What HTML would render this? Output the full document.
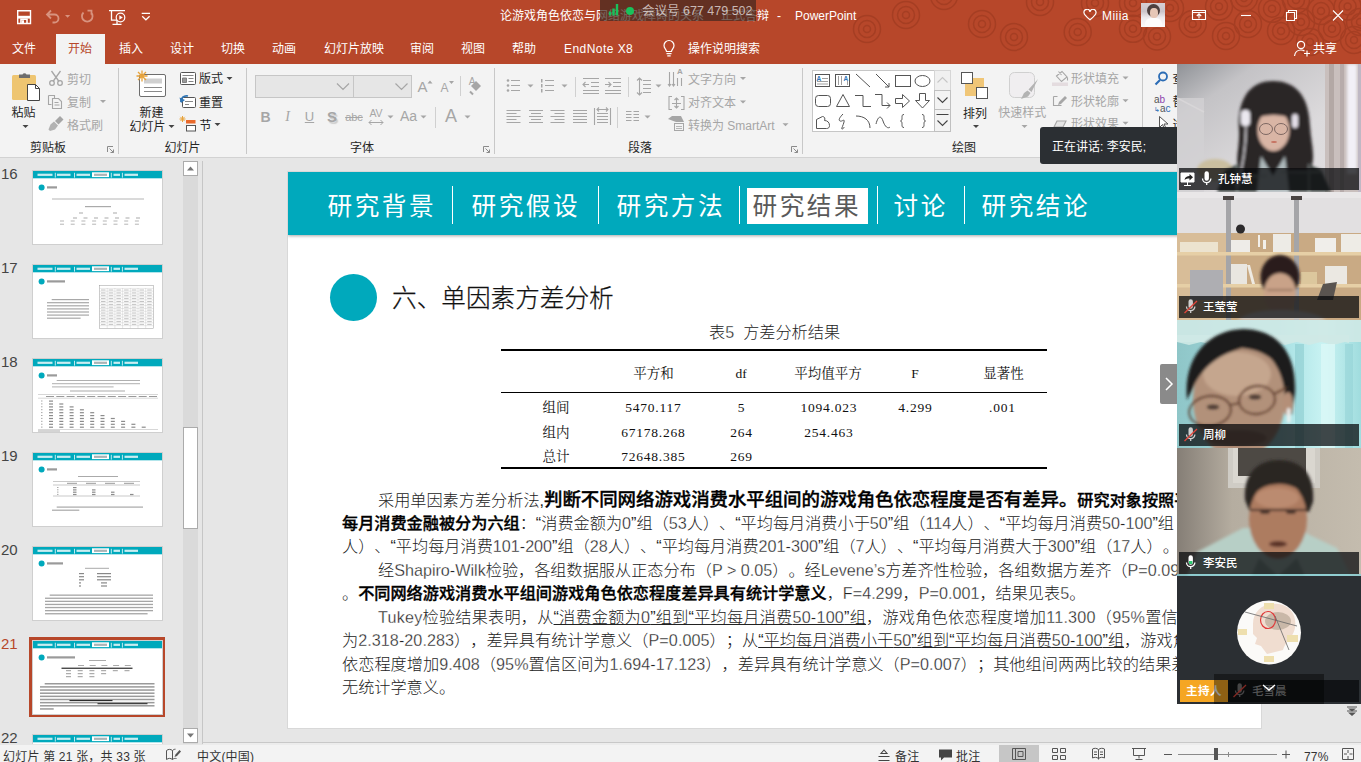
<!DOCTYPE html>
<html lang="zh-CN">
<head>
<meta charset="utf-8">
<title>PowerPoint</title>
<style>
*{box-sizing:border-box;margin:0;padding:0}
html,body{width:1361px;height:762px;overflow:hidden}
body{position:relative;background:#e6e6e6;font-family:"Liberation Sans","Noto Sans CJK SC",sans-serif;font-size:13px;color:#262626}
.abs{position:absolute}
#top{left:0;top:0;width:1361px;height:64px;background:#b7472a;overflow:hidden}
#top .t{margin-top:.5px;position:absolute;color:#fff;font-size:12px;line-height:16px;white-space:nowrap}
#acttab{left:56px;top:34px;width:49px;height:30px;background:#f3f3f3}
#ribbon{left:0;top:64px;width:1361px;height:94px;background:#f3f3f3;border-bottom:1px solid #d2d2d2;overflow:hidden}
#ribbon .l{position:absolute;margin-top:1.5px;font-size:12px;line-height:16px;white-space:nowrap;color:#262626}
#ribbon .g{color:#a6a6a6}
#ribbon .sep{position:absolute;top:5px;width:1px;height:83px;background:#d4d4d4}
#status{left:0;top:742px;width:1361px;height:20px;background:linear-gradient(#f3f3f3,#f3f3f3) 0 3px/100% 100% no-repeat}
#status .l{position:absolute;font-size:12px;line-height:16px;white-space:nowrap;color:#333;top:6.500px;letter-spacing:.2px}
#thumbs{left:0;top:158px;width:183px;height:586px;overflow:hidden}
#slide{left:288px;top:172px;width:973px;height:556px;background:#fff;overflow:hidden;box-shadow:0 0 0 1px #d8d8d8}
#video{left:1177px;top:64px;width:184px;height:640px;background:#2b2f33;overflow:hidden}
.hd{position:absolute;top:16px;font-size:24.640px;line-height:38px;letter-spacing:2.500px;color:#fff;white-space:nowrap}
.vs{position:absolute;top:14px;width:1px;height:38px;background:#fff}
#tbl span{position:absolute;font-family:"Liberation Serif","Noto Serif CJK SC",serif;font-size:13.500px;line-height:18px;width:120px;text-align:center;white-space:nowrap;color:#111}
#para p{text-spacing-trim:space-all;position:absolute;left:54px;font-size:16.170px;line-height:23px;font-weight:300;white-space:nowrap;color:#222}
#para b{font-weight:500;color:#000;-webkit-text-stroke:.35px #000}
#para b.big{font-size:18.480px;letter-spacing:-.08px}
.n5{-webkit-text-stroke:.3px #fff}
#para .n{-webkit-text-stroke:.3px #fff}
</style>
</head>
<body>
<div id="top" class="abs">
<svg class="abs" style="left:0;top:0" width="1361" height="64" viewBox="0 0 1361 64" fill="none" stroke="#a53e23" stroke-width="1.500"><defs><g id="cc"><circle r="3.500"/><circle r="8.500"/><circle r="13.500"/></g></defs><use href="#cc" x="867" y="29"/><use href="#cc" x="906" y="15"/><use href="#cc" x="944" y="-4"/><use href="#cc" x="982" y="24"/><use href="#cc" x="1014" y="37"/><use href="#cc" x="1040" y="2"/><use href="#cc" x="1077.7" y="32"/><use href="#cc" x="1095" y="3"/><use href="#cc" x="1133" y="28.8"/><use href="#cc" x="1157" y="36.5"/><use href="#cc" x="1133" y="3"/><use href="#cc" x="1170" y="8"/><use href="#cc" x="1192.7" y="24"/><use href="#cc" x="1219" y="6.6"/><use href="#cc" x="1226" y="36"/><use href="#cc" x="1248" y="24"/><use href="#cc" x="1272" y="8.8"/><use href="#cc" x="1281" y="31"/><use href="#cc" x="1301" y="22"/><use href="#cc" x="1321" y="11"/><use href="#cc" x="1347.6" y="6.6"/><use href="#cc" x="1332" y="28.8"/><use href="#cc" x="1354" y="40"/><use href="#cc" x="1310" y="42"/><use href="#cc" x="1296" y="0"/><use href="#cc" x="1244" y="-2"/><use href="#cc" x="1360" y="22"/></svg>
<!-- quick access icons -->
<svg class="abs" style="left:0;top:0" width="170" height="32" viewBox="0 0 170 32" fill="none" stroke="#fff" stroke-width="1.400">
<path d="M17.700 10.700h12.800v12.800h-12.800z"/><path d="M17.700 15.800h12.800v2.800h-12.800z" fill="#fff" stroke="none"/><path d="M21 23.500v-4.200h6v4.200" stroke-width="1.600"/><path d="M22 20.300h2v3.200h-2z" fill="#fff" stroke="none"/>
<g stroke="#d8937f" stroke-width="1.800"><path d="M47 14.500h7.500a4 4 0 0 1 0 8h-2 M51 10.500l-4 4 4 4"/><path d="M65 15h5.200l-2.600 2.800z" fill="#d8937f" stroke="none"/><path d="M83.500 12.500a5.300 5.300 0 1 0 7.500 0 M87.500 10.700h4v4"/></g>
<path d="M109 10.700h16 M111.500 10.700v9.500h6 M112.500 24.300h9 M117 20.500v3.500" stroke-width="1.300"/><circle cx="120.500" cy="17.500" r="4.300" fill="#b7472a" stroke-width="1.200"/><path d="M119.300 15.300v4.400l3.500-2.200z" fill="#fff" stroke="none"/>
<path d="M141.700 13.300h8.300 M142.200 16.300l3.700 3.500 3.700-3.500" stroke-width="1.200"/>
</svg>
<div id="acttab" class="abs"></div>
<span class="t" style="left:500px;top:7px">论游戏角色依恋与网络游戏障碍的关系</span><span class="t" style="left:721px;top:7px">正式答辩</span><span class="t" style="left:777px;top:7px">-</span><span class="t" style="left:795px;top:7px">PowerPoint</span>
<div class="abs" style="left:600px;top:0;width:156px;height:21px;background:rgba(66,40,32,.72)"></div>
<svg class="abs" style="left:606px;top:0" width="32" height="20" viewBox="0 0 32 20"><path d="M4 15.500v-4M7.500 15.500v-7M11 15.500v-11.500" stroke="#19c15b" stroke-width="2.400" fill="none"/><circle cx="24" cy="11" r="4" fill="#19c15b"/></svg>
<span class="t" style="left:642px;top:2px;color:rgba(255,255,255,.66);font-size:12.500px">会议号 677 479 502</span>
<svg class="abs" style="left:1083px;top:9px" width="14" height="12" viewBox="0 0 14 12"><path d="M7 10.800C3.500 8 1 6 1 3.800a2.800 2.800 0 0 1 6-1 2.800 2.800 0 0 1 6 1C13 6 10.500 8 7 10.800z" fill="none" stroke="#fff" stroke-width="1.200"/></svg><span class="t" style="left:1102px;top:7px;letter-spacing:.45px">Miiia</span>
<div class="abs" style="left:1141px;top:3px;width:24px;height:24px;background:linear-gradient(180deg,#d6cfd4 0,#cbc4c9 35%,#efecef 62%,#fbfbfb 100%);overflow:hidden"><div class="abs" style="left:6px;top:1px;width:13px;height:13px;border-radius:50%;background:#4e403f"></div><div class="abs" style="left:8.500px;top:5px;width:8px;height:10px;border-radius:45%;background:#e6c6b6"></div><div class="abs" style="left:4px;top:15px;width:17px;height:10px;border-radius:6px 6px 0 0;background:#fdfcfc"></div></div>
<svg class="abs" style="left:1185px;top:0" width="176" height="32" viewBox="0 0 176 32" fill="none" stroke="#fff" stroke-width="1.100">
<path d="M7.500 10.500h13v9h-13z M7.500 12.500h13 M14 18.500v-4.500 M11.800 16l2.200-2.200 2.200 2.200"/>
<path d="M56 15.500h10"/>
<path d="M101.500 12.500h8v8h-8z M103.500 12.500v-2h8v8h-2"/>
<path d="M148 10.500l10 10 M158 10.500l-10 10"/>
</svg>
<span class="t" style="left:12px;top:40px">文件</span>
<span class="t" style="left:68px;top:40px;color:#b7472a">开始</span>
<span class="t" style="left:119px;top:40px">插入</span>
<span class="t" style="left:170px;top:40px">设计</span>
<span class="t" style="left:221px;top:40px">切换</span>
<span class="t" style="left:272px;top:40px">动画</span>
<span class="t" style="left:324px;top:40px">幻灯片放映</span>
<span class="t" style="left:410px;top:40px">审阅</span>
<span class="t" style="left:461px;top:40px">视图</span>
<span class="t" style="left:512px;top:40px">帮助</span>
<span class="t" style="left:564px;top:40px;letter-spacing:.45px">EndNote X8</span>
<svg class="abs" style="left:660px;top:38px" width="18" height="20" viewBox="0 0 18 20" fill="none" stroke="#fff" stroke-width="1.200"><path d="M6.500 13.500c0-2-2.500-3-2.500-6a5 5 0 0 1 10 0c0 3-2.500 4-2.500 6z M6.500 15.700h5 M7.300 17.800h3.400"/></svg>
<span class="t" style="left:688px;top:40px">操作说明搜索</span>
<svg class="abs" style="left:1292px;top:38px" width="20" height="20" viewBox="0 0 20 20" fill="none" stroke="#fff" stroke-width="1.200"><circle cx="9" cy="7" r="3.600"/><path d="M2.500 18c.5-4 3-6 6.500-6 1.500 0 2.500.3 3.500 1 M15 12.500v6 M12 15.500h6"/></svg>
<span class="t" style="left:1313px;top:40px">共享</span>
</div>
<div id="ribbon" class="abs">
<svg class="abs" style="left:0;top:0" width="1361" height="94" viewBox="0 0 1361 94">
<rect x="12" y="11" width="24" height="25" rx="1.500" fill="#eec571" stroke="none"/>
<path d="M19 14v-3.500h3.500a2.200 2.200 0 0 1 4 0h3.500v3.500z" fill="#6d6d6d" stroke="none"/>
<path d="M27.500 20.500h8l4 4v12h-12z" fill="#fff" stroke="#444" stroke-width="1"/><path d="M35.500 20.500v4h4" fill="none" stroke="#444"/>
<path d="M22.5 61.0h6l-3 3z" fill="#444" stroke="none"/>
<g fill="none" stroke="#a6a6a6" stroke-width="1.300"><path d="M51.500 7l7.500 10.500 M60.500 7l-7.500 10.500"/><circle cx="52" cy="19" r="2.300"/><circle cx="60" cy="19" r="2.300"/></g>
<g fill="none" stroke="#a6a6a6" stroke-width="1.100"><path d="M48.500 31.500h6v3 M48.500 31.500v9h3"/><path d="M52.500 34.500h6l3 3v7h-9z"/><path d="M54.500 38.500h4 M54.500 41h5"/></g>
<path d="M100 36.0h6l-3 3z" fill="#a6a6a6" stroke="none"/>
<g fill="#a6a6a6" stroke="none"><path d="M60 52l3.500 3.500-5 5-3.500-3.500z"/><path d="M54 57.500l4 4-3 4-5 1.500-1.500-1.500 2-5z" opacity=".85"/></g>
<g fill="none" stroke="#8a8a8a" stroke-width="1"><path d="M108.5 83.5h-.01 M107.5 82.5h5.500 M107.5 82.5v5.500"/><path d="M109.5 84.5l4 4 M113.5 85.5v3h-3"/></g>
<path d="M118.5 4v86" stroke="#c8c8c8" stroke-width="1"/>
<rect x="139.500" y="10.500" width="26" height="22" rx="1.500" fill="#fff" stroke="#6d6d6d"/><rect x="144" y="14.500" width="18" height="5" fill="#d0d0d0"/><path d="M144 23.500h18 M144 27.500h18" stroke="#8a8a8a"/>
<g stroke="#e8a33a" stroke-width="1.300" fill="none"><path d="M142 6.500v11 M136.500 12h11 M138 8l8 8 M146 8l-8 8"/></g>
<path d="M168.5 61.0h6l-3 3z" fill="#444" stroke="none"/>
<rect x="180.500" y="8.500" width="15" height="12" rx="1" fill="#fff" stroke="#555"/><path d="M182.500 11.500h11 M182.500 14v4.500h4v-4.500z M188.500 14.500h5 M188.500 17.500h5" fill="#999" stroke="#777" stroke-width=".9"/>
<path d="M226.5 13.0h6l-3 3z" fill="#444" stroke="none"/>
<rect x="182.500" y="33.500" width="13" height="10" rx="1" fill="#fff" stroke="#555"/><path d="M185 37.500h8 M185 40.500h4" stroke="#888"/><path d="M181 38c-.5-4 3-7 7-6" fill="none" stroke="#2e75b6" stroke-width="1.800"/><path d="M179.500 33.500l1.500 5.500 4-3z" fill="#2e75b6"/>
<g stroke="#e8a33a" stroke-width="1" fill="none"><path d="M182.500 52v6 M179.500 55h6 M180.400 52.900l4.200 4.200 M184.600 52.900l-4.200 4.200"/></g><rect x="186" y="56" width="9.500" height="3.500" fill="#e96a2c"/><rect x="186.500" y="61.500" width="9" height="5.500" fill="#fff" stroke="#555"/>
<path d="M214.5 59.0h6l-3 3z" fill="#444" stroke="none"/>
<path d="M246.5 4v86" stroke="#c8c8c8" stroke-width="1"/>
<rect x="255.500" y="11.500" width="98" height="22" fill="#e6e6e6" stroke="#c6c6c6"/><rect x="353.500" y="11.500" width="58" height="22" fill="#e6e6e6" stroke="#c6c6c6"/>
<path d="M337 19.500l6 6 6-6 M395.500 19.500l6 6 6-6" fill="none" stroke="#a6a6a6" stroke-width="1.200"/>
<path d="M460.500 12v20 M435.500 43v21" stroke="#d0d0d0"/>
<path d="M494.5 4v86" stroke="#c8c8c8" stroke-width="1"/>
<g fill="none" stroke="#8a8a8a" stroke-width="1"><path d="M484.5 83.5h-.01 M483.5 82.5h5.500 M483.5 82.5v5.500"/><path d="M485.5 84.5l4 4 M489.5 85.5v3h-3"/></g>
<path d="M427.500 19.500l2.500-3 2.500 3z M449 17l2.500 3 2.500-3z" fill="#a6a6a6"/>
<path d="M476 17l5 5-5 5-5-5z" fill="#a6a6a6"/><path d="M470 27.500l3 3" stroke="#a6a6a6" stroke-width="2"/>
<path d="M369 58.500h14 M371.500 56l-2.500 2.500 2.500 2.500 M380.500 56l2.500 2.500-2.500 2.500" fill="none" stroke="#a6a6a6" stroke-width="1"/>
<path d="M387.5 51.5h6l-3 3z" fill="#a6a6a6" stroke="none"/>
<path d="M420.5 51.5h6l-3 3z" fill="#a6a6a6" stroke="none"/>
<path d="M464.5 51.5h6l-3 3z" fill="#a6a6a6" stroke="none"/>
<g fill="none" stroke="#a6a6a6" stroke-width="1.100"><path d="M511 16.500h9 M511 21.500h9 M511 26.500h9"/><path d="M545 16.500h9 M545 21.500h9 M545 26.500h9"/></g>
<g fill="#a6a6a6"><circle cx="508" cy="16.500" r="1.300"/><circle cx="508" cy="21.500" r="1.300"/><circle cx="508" cy="26.500" r="1.300"/><rect x="541" y="15" width="1.500" height="3.500"/><rect x="541" y="20" width="1.500" height="3.500"/><rect x="541" y="25" width="1.500" height="3.500"/></g>
<path d="M527.5 20.5h6l-3 3z" fill="#a6a6a6" stroke="none"/>
<path d="M561.5 20.5h6l-3 3z" fill="#a6a6a6" stroke="none"/>
<path d="M575.500 13v20 M628.500 13v20 M617.500 43v21" stroke="#d0d0d0"/>
<g fill="none" stroke="#a6a6a6" stroke-width="1.100"><path d="M583 14.500h16 M591 18.500h8 M591 22.500h8 M583 26.500h16 M583 29.500h16 M583 20.500h6 M585.500 18l-2.500 2.500 2.500 2.500"/><path d="M605 14.500h16 M613 18.500h8 M613 22.500h8 M605 26.500h16 M605 29.500h16 M605 20.500h6 M608.500 18l2.500 2.500-2.500 2.500"/></g>
<g fill="none" stroke="#a6a6a6" stroke-width="1.100"><path d="M643 16.500h8 M643 20.500h8 M643 24.500h8 M643 28.500h8 M639.500 14v17 M637 16.500l2.500-2.500 2.500 2.500 M637 28.500l2.500 2.500 2.500-2.500"/></g>
<path d="M655.5 20.5h6l-3 3z" fill="#a6a6a6" stroke="none"/>
<path d="M506.5 46.5h14 M506.5 49.5h10 M506.5 52.5h14 M506.5 55.5h10 M506.5 58.5h14 " fill="none" stroke="#a6a6a6" stroke-width="1.100"/>
<path d="M529.0 46.5h14 M531.0 49.5h10 M529.0 52.5h14 M531.0 55.5h10 M529.0 58.5h14 " fill="none" stroke="#a6a6a6" stroke-width="1.100"/>
<path d="M550.5 46.5h14 M554.5 49.5h10 M550.5 52.5h14 M554.5 55.5h10 M550.5 58.5h14 " fill="none" stroke="#a6a6a6" stroke-width="1.100"/>
<path d="M573 46.5h14 M573 49.5h14 M573 52.5h14 M573 55.5h14 M573 58.5h14 " fill="none" stroke="#a6a6a6" stroke-width="1.100"/>
<g fill="none" stroke="#a6a6a6" stroke-width="1.100"><path d="M597 49.500h11 M597 52.500h11 M597 55.500h11 M597 58.500h11 M594.500 44v17 M610.500 44v17 M597 45.500h11 M599 43.500l-2 2 2 2 M606 43.500l2 2-2 2"/></g>
<g fill="none" stroke="#a6a6a6" stroke-width="1.100"><path d="M626 47.500h5.500 M626 50.500h5.500 M626 53.500h5.500 M626 56.500h5.500 M633.500 47.500h5.500 M633.500 50.500h5.500 M633.500 53.500h5.500 M633.500 56.500h5.500"/></g>
<path d="M644.5 51.5h6l-3 3z" fill="#a6a6a6" stroke="none"/>
<g fill="none" stroke="#a6a6a6" stroke-width="1.100"><path d="M669.500 8v14 M673.500 8v14 M677.500 14v8 M681.500 14v8 M668 20l1.500 2 1.500-2 M672 20l1.500 2 1.500-2"/></g>
<path d="M740 13.0h6l-3 3z" fill="#a6a6a6" stroke="none"/>
<g fill="none" stroke="#a6a6a6" stroke-width="1.100"><path d="M672 32.500h-3v13h3 M681 32.500h3v13h-3 M676.500 34v10 M674.500 36l2-2 2 2 M674.500 42l2 2 2-2 M672 39.500h9"/></g>
<path d="M740 36.5h6l-3 3z" fill="#a6a6a6" stroke="none"/>
<path d="M668 55l4-3h9l3 6h-8" fill="#a6a6a6"/><rect x="674.500" y="59.500" width="9" height="7" fill="#f3f3f3" stroke="#a6a6a6"/><path d="M676 62.500h6 M676 64.500h6" stroke="#a6a6a6" stroke-width=".8"/>
<path d="M782.5 59.3h6l-3 3z" fill="#a6a6a6" stroke="none"/>
<g fill="none" stroke="#8a8a8a" stroke-width="1"><path d="M792.5 83.5h-.01 M791.5 82.5h5.500 M791.5 82.5v5.500"/><path d="M793.5 84.5l4 4 M797.5 85.5v3h-3"/></g>
<path d="M802.5 4v86" stroke="#c8c8c8" stroke-width="1"/>
<rect x="812.500" y="6.500" width="138" height="61" fill="#fff" stroke="#c6c6c6"/>
<rect x="934.500" y="6.500" width="16" height="20" fill="#f0f0f0" stroke="#d6d6d6"/><rect x="934.500" y="26.500" width="16" height="19" fill="#f3f3f3" stroke="#c0c0c0"/><rect x="934.500" y="45.500" width="16" height="22" fill="#f3f3f3" stroke="#c0c0c0"/>
<path d="M937.500 18.500l5-5 5 5" fill="none" stroke="#c6c6c6" stroke-width="1.100"/><path d="M937.500 33.500l5 5 5-5 M937.500 56.500l5 5 5-5 M936.500 50.500h12" fill="none" stroke="#444" stroke-width="1.100"/>
<g fill="none" stroke="#555" stroke-width="1"><rect x="815.500" y="10.500" width="14" height="12"/><path d="M822 14.500h6 M817 17.500h11 M817 20h11" stroke="#888" stroke-width=".8"/><rect x="835.500" y="10.500" width="14" height="12"/><path d="M838.500 12v9 M841.500 12v9 M847.500 17v4" stroke="#888" stroke-width=".8"/><path d="M856 10l14 13"/><path d="M876 10l13 13 M889 19v4h-4"/><rect x="895.500" y="11.500" width="15" height="11"/><ellipse cx="922.500" cy="17" rx="7.500" ry="5.500"/></g>
<text x="816.500" y="16.500" font-size="6.500" font-weight="bold" fill="#2e75b6" font-family="Liberation Sans, sans-serif">A</text><text x="843.500" y="17" font-size="6.500" font-weight="bold" fill="#2e75b6" font-family="Liberation Sans, sans-serif">A</text>
<g fill="none" stroke="#555" stroke-width="1"><rect x="815.500" y="31.500" width="15" height="11" rx="3"/><path d="M843 30.500l6.500 12h-13z"/><path d="M855 31.500h8v11h8"/><path d="M875 30.500h7v11h8 M887 38.500l3 3-3 3"/><path d="M895.500 34.500h7v-4l7 6.500-7 6.500v-4h-7z"/><path d="M919.500 29.500h6v7h4l-7 7.500-7-7.500h4z"/></g>
<g fill="none" stroke="#555" stroke-width="1"><path d="M816.500 64.500v-9l6-3c2 0 3 2 2 4 3 0 5 2 5 5 0 2-1 3-3 3z"/><path d="M843 50c-3 3-5 6-3 7s5-3 4 1-3 7-2 7 2-1 2-2"/><path d="M856 52c8 0 14 4 14 12"/><path d="M876 60c2-8 5-9 7-3s5 8 7 6"/><path d="M904 50.500c-2 0-2 1-2 3s0 3-1.500 3.500c1.500.5 1.500 1.500 1.500 3.500s0 3 2 3"/><path d="M922 50.500c2 0 2 1 2 3s0 3 1.500 3.500c-1.500.5-1.500 1.500-1.500 3.500s0 3-2 3"/></g>
<rect x="965" y="14" width="19" height="18" fill="#f0c677"/><rect x="961.500" y="8.500" width="11" height="11" fill="#fff" stroke="#555"/><rect x="976.500" y="23.500" width="11" height="11" fill="#fff" stroke="#555"/>
<path d="M973 61.099999999999994h6l-3 3z" fill="#444" stroke="none"/>
<rect x="1009.500" y="8.500" width="25" height="25" rx="5" fill="#f0eef0" stroke="#d0d0d0"/><path d="M1038 15l-9.500 10.500 3 2.500z M1027.500 26.500l3 2.500-2.500 3.500-7 2.500 3-6z" fill="#b3b3b3"/>
<path d="M1021.5 61.099999999999994h6l-3 3z" fill="#a6a6a6" stroke="none"/>
<g fill="none" stroke="#a6a6a6" stroke-width="1.100"><path d="M1056.500 12l5.500-4.500 5 5.500-5.500 4.500z M1058.500 7.500l3 3.500 M1067.500 13.500v3"/><path d="M1053.500 32.500h4 M1053.500 32.500v9h8"/><path d="M1058 41l1-3 6-6 2 2-6 6z" fill="#a6a6a6" stroke="none"/><path d="M1054 63l3-6h9l-3 6z" fill="#e4e4e4"/></g><rect x="1052" y="18.500" width="16" height="3.500" fill="#e4dcdf"/>
<path d="M1122.5 12.5h6l-3 3z" fill="#a6a6a6" stroke="none"/>
<path d="M1122.5 35.2h6l-3 3z" fill="#a6a6a6" stroke="none"/>
<path d="M1122.5 57.7h6l-3 3z" fill="#a6a6a6" stroke="none"/>
<path d="M1142.5 4v86" stroke="#c8c8c8" stroke-width="1"/>
<circle cx="1163" cy="12.500" r="4" fill="none" stroke="#2b6cb5" stroke-width="1.800"/><path d="M1160 16l-4.500 4.500" stroke="#2b6cb5" stroke-width="2.200"/>
<path d="M1159.500 52.500v11l3-3 2 4.500 1.500-.7-2-4.300h4z" fill="#fff" stroke="#555" stroke-width="1"/>
</svg>
<span class="l" style="left:11.5px;top:39.8px;font-size:12px">粘贴</span>
<span class="l g" style="left:67px;top:6.3px;">剪切</span>
<span class="l g" style="left:67px;top:29.2px;">复制</span>
<span class="l g" style="left:67px;top:52.0px;">格式刷</span>
<span class="l" style="left:30px;top:74.9px;">剪贴板</span>
<span class="l" style="left:139.5px;top:39.8px;font-size:12px">新建</span>
<span class="l" style="left:129.5px;top:53.5px;font-size:12px">幻灯片</span>
<span class="l" style="left:199px;top:5.8px;">版式</span>
<span class="l" style="left:199px;top:29.2px;">重置</span>
<span class="l" style="left:199.5px;top:52.0px;">节</span>
<span class="l" style="left:164.5px;top:74.9px;font-size:12px">幻灯片</span>
<span class="l" style="left:350px;top:74.9px;font-size:12px">字体</span>
<span class="l g" style="left:402.5px;width:40px;text-align:center;margin-top:-.5px;top:13px;line-height:20px;font-size:15px;">A</span>
<span class="l g" style="left:424.5px;width:40px;text-align:center;margin-top:-.5px;top:14px;line-height:20px;font-size:12px;">A</span>
<span class="l g" style="left:452px;width:40px;text-align:center;margin-top:-.5px;top:8.5px;line-height:20px;font-size:10px;">A</span>
<span class="l g" style="left:245.5px;width:40px;text-align:center;margin-top:-.5px;top:43px;line-height:20px;font-size:14px;font-weight:bold">B</span>
<span class="l g" style="left:267.5px;width:40px;text-align:center;margin-top:-.5px;top:43px;line-height:20px;font-size:14px;font-style:italic;font-family:Liberation Serif,serif">I</span>
<span class="l g" style="left:289.5px;width:40px;text-align:center;margin-top:-.5px;top:43px;line-height:20px;font-size:13px;text-decoration:underline">U</span>
<span class="l g" style="left:312px;width:40px;text-align:center;margin-top:-.5px;top:43.5px;line-height:20px;font-size:15px;font-weight:bold;text-shadow:1.500px 1.500px 1px #ccc">S</span>
<span class="l g" style="left:334px;width:40px;text-align:center;margin-top:-.5px;top:43.5px;line-height:20px;font-size:11px;text-decoration:line-through">abc</span>
<span class="l g" style="left:356px;width:40px;text-align:center;margin-top:-.5px;top:39.5px;line-height:20px;font-size:10.5px;">AV</span>
<span class="l g" style="left:388.5px;width:40px;text-align:center;margin-top:-.5px;top:42.5px;line-height:20px;font-size:14px;">Aa</span>
<span class="l g" style="left:431px;width:40px;text-align:center;margin-top:-.5px;top:42px;line-height:20px;font-size:18px;">A</span>
<span class="l g" style="left:660px;width:40px;text-align:center;margin-top:-.5px;top:-1.5px;line-height:20px;font-size:8px;font-weight:bold">A</span>
<span class="l g" style="left:688px;top:6.0px;font-size:12px">文字方向</span>
<span class="l g" style="left:688px;top:29.5px;font-size:12px">对齐文本</span>
<span class="l g" style="left:688px;top:52.3px;font-size:12px">转换为 SmartArt</span>
<span class="l" style="left:628px;top:74.9px;font-size:12px">段落</span>
<span class="l" style="left:963px;top:40.2px;font-size:12px">排列</span>
<span class="l g" style="left:998.3px;top:39.2px;font-size:12px">快速样式</span>
<span class="l" style="left:952px;top:74.9px;font-size:12px">绘图</span>
<span class="l g" style="left:1071px;top:5.5px;font-size:12px">形状填充</span>
<span class="l g" style="left:1071px;top:28.2px;font-size:12px">形状轮廓</span>
<span class="l g" style="left:1071px;top:50.7px;font-size:12px">形状效果</span>
<span class="l" style="left:1172.5px;top:5.5px;">查找</span>
<span class="l" style="left:1154px;top:29px;font-size:10px;line-height:9px;color:#555">a<span style="color:#8e44ad">b</span><br><span style="color:#2b6cb5;font-size:7px">↳</span>a<span style="color:#2b6cb5">c</span></span>
<span class="l" style="left:1172.5px;top:28.5px;">替换</span>
<span class="l" style="left:1172.5px;top:51.0px;">选择</span>
</div>
<div id="thumbs" class="abs">
<span class="abs" style="left:1px;top:6px;font-size:15px;line-height:20px;color:#444">16</span>
<svg class="abs" style="left:33px;top:12.5px;background:#fff;outline:1px solid #cfcfcf" width="129" height="73" viewBox="0 0 129 73"><rect width="129" height="7.300" fill="#00a9bc"/><rect x="59" y="1.300" width="17" height="4.800" fill="#fff"/><rect x="4.5" y="2.700" width="15" height="2.200" fill="#c9edf1"/><rect x="24" y="2.700" width="13.5" height="2.200" fill="#c9edf1"/><rect x="43.5" y="2.700" width="13.5" height="2.200" fill="#c9edf1"/><rect x="80.5" y="2.700" width="6.5" height="2.200" fill="#c9edf1"/><rect x="91.5" y="2.700" width="13.5" height="2.200" fill="#c9edf1"/><rect x="61" y="2.700" width="13" height="2.200" fill="#a9b4b6"/><path d="M22.300 1.800v4.800M41.500 1.800v4.800M78.300 1.800v4.800M89.400 1.800v4.800" stroke="#f0fbfc" stroke-width=".8"/><circle cx="8.600" cy="16.400" r="3" fill="#00a9bc"/><rect x="14" y="15.300" width="10" height="2.200" fill="#9a9a9a"/><rect x="19.0" y="27.50" width="92.0" height="1" fill="#b5b5b5"/><rect x="52" y="35" width="26" height="1.200" fill="#aaa"/><rect x="46" y="41.500" width="4" height="1" fill="#aaa"/><rect x="80" y="41.500" width="4" height="1" fill="#aaa"/><rect x="40.0" y="46.5" width="4" height="1" fill="#aaa"/><rect x="50.5" y="46.5" width="4" height="1" fill="#aaa"/><rect x="61.0" y="46.5" width="4" height="1" fill="#aaa"/><rect x="71.5" y="46.5" width="4" height="1" fill="#aaa"/><rect x="82.0" y="46.5" width="4" height="1" fill="#aaa"/><rect x="92.5" y="46.5" width="4" height="1" fill="#aaa"/><rect x="103.0" y="46.5" width="4" height="1" fill="#aaa"/><rect x="27.0" y="49.5" width="4" height="1" fill="#b5b5b5"/><rect x="37.7" y="49.5" width="4" height="1" fill="#b5b5b5"/><rect x="48.4" y="49.5" width="4" height="1" fill="#b5b5b5"/><rect x="59.1" y="49.5" width="4" height="1" fill="#b5b5b5"/><rect x="69.8" y="49.5" width="4" height="1" fill="#b5b5b5"/><rect x="80.5" y="49.5" width="4" height="1" fill="#b5b5b5"/><rect x="91.2" y="49.5" width="4" height="1" fill="#b5b5b5"/><rect x="101.9" y="49.5" width="4" height="1" fill="#b5b5b5"/><rect x="27.0" y="52.7" width="4" height="1" fill="#b5b5b5"/><rect x="37.7" y="52.7" width="4" height="1" fill="#b5b5b5"/><rect x="48.4" y="52.7" width="4" height="1" fill="#b5b5b5"/><rect x="59.1" y="52.7" width="4" height="1" fill="#b5b5b5"/><rect x="69.8" y="52.7" width="4" height="1" fill="#b5b5b5"/><rect x="80.5" y="52.7" width="4" height="1" fill="#b5b5b5"/><rect x="91.2" y="52.7" width="4" height="1" fill="#b5b5b5"/><rect x="101.9" y="52.7" width="4" height="1" fill="#b5b5b5"/></svg>
<span class="abs" style="left:1px;top:100px;font-size:15px;line-height:20px;color:#444">17</span>
<svg class="abs" style="left:33px;top:106.5px;background:#fff;outline:1px solid #cfcfcf" width="129" height="73" viewBox="0 0 129 73"><rect width="129" height="7.300" fill="#00a9bc"/><rect x="59" y="1.300" width="17" height="4.800" fill="#fff"/><rect x="4.5" y="2.700" width="15" height="2.200" fill="#c9edf1"/><rect x="24" y="2.700" width="13.5" height="2.200" fill="#c9edf1"/><rect x="43.5" y="2.700" width="13.5" height="2.200" fill="#c9edf1"/><rect x="80.5" y="2.700" width="6.5" height="2.200" fill="#c9edf1"/><rect x="91.5" y="2.700" width="13.5" height="2.200" fill="#c9edf1"/><rect x="61" y="2.700" width="13" height="2.200" fill="#a9b4b6"/><path d="M22.300 1.800v4.800M41.500 1.800v4.800M78.300 1.800v4.800M89.400 1.800v4.800" stroke="#f0fbfc" stroke-width=".8"/><circle cx="8.600" cy="16.400" r="3" fill="#00a9bc"/><rect x="14" y="15.300" width="18" height="2.200" fill="#9a9a9a"/><rect x="18.7" y="34.00" width="37.3" height="1.2" fill="#a8a8a8"/><rect x="14.0" y="37.10" width="42.0" height="1.2" fill="#a8a8a8"/><rect x="14.0" y="40.20" width="42.0" height="1.2" fill="#a8a8a8"/><rect x="14.0" y="43.30" width="42.0" height="1.2" fill="#a8a8a8"/><rect x="14.0" y="46.40" width="42.0" height="1.2" fill="#a8a8a8"/><rect x="14.0" y="49.50" width="42.0" height="1.2" fill="#a8a8a8"/><rect x="14.0" y="52.60" width="33.6" height="1.2" fill="#a8a8a8"/><rect x="66.500" y="20.500" width="54" height="43" fill="#fff" stroke="#999" stroke-width=".5"/><path d="M66.500 23.4h54" stroke="#bbb" stroke-width=".35"/><path d="M66.500 26.2h54" stroke="#bbb" stroke-width=".35"/><path d="M66.500 29.1h54" stroke="#bbb" stroke-width=".35"/><path d="M66.500 32.0h54" stroke="#bbb" stroke-width=".35"/><path d="M66.500 34.9h54" stroke="#bbb" stroke-width=".35"/><path d="M66.500 37.7h54" stroke="#bbb" stroke-width=".35"/><path d="M66.500 40.6h54" stroke="#bbb" stroke-width=".35"/><path d="M66.500 43.5h54" stroke="#bbb" stroke-width=".35"/><path d="M66.500 46.3h54" stroke="#bbb" stroke-width=".35"/><path d="M66.500 49.2h54" stroke="#bbb" stroke-width=".35"/><path d="M66.500 52.1h54" stroke="#bbb" stroke-width=".35"/><path d="M66.500 54.9h54" stroke="#bbb" stroke-width=".35"/><path d="M66.500 57.8h54" stroke="#bbb" stroke-width=".35"/><path d="M66.500 60.7h54" stroke="#bbb" stroke-width=".35"/><path d="M74.2 23v40.500" stroke="#bbb" stroke-width=".35"/><path d="M81.9 23v40.500" stroke="#bbb" stroke-width=".35"/><path d="M89.6 23v40.500" stroke="#bbb" stroke-width=".35"/><path d="M97.3 23v40.500" stroke="#bbb" stroke-width=".35"/><path d="M105.0 23v40.500" stroke="#bbb" stroke-width=".35"/><path d="M112.7 23v40.500" stroke="#bbb" stroke-width=".35"/><rect x="68.0" y="24.5" width="4.5" height="1" fill="#c4c4c4"/><rect x="75.7" y="24.5" width="4.5" height="1" fill="#c4c4c4"/><rect x="83.4" y="24.5" width="4.5" height="1" fill="#c4c4c4"/><rect x="91.1" y="24.5" width="4.5" height="1" fill="#c4c4c4"/><rect x="98.8" y="24.5" width="4.5" height="1" fill="#c4c4c4"/><rect x="106.5" y="24.5" width="4.5" height="1" fill="#c4c4c4"/><rect x="114.2" y="24.5" width="4.5" height="1" fill="#c4c4c4"/><rect x="68.0" y="27.4" width="4.5" height="1" fill="#c4c4c4"/><rect x="75.7" y="27.4" width="4.5" height="1" fill="#c4c4c4"/><rect x="83.4" y="27.4" width="4.5" height="1" fill="#c4c4c4"/><rect x="91.1" y="27.4" width="4.5" height="1" fill="#c4c4c4"/><rect x="98.8" y="27.4" width="4.5" height="1" fill="#c4c4c4"/><rect x="106.5" y="27.4" width="4.5" height="1" fill="#c4c4c4"/><rect x="114.2" y="27.4" width="4.5" height="1" fill="#c4c4c4"/><rect x="68.0" y="30.2" width="4.5" height="1" fill="#c4c4c4"/><rect x="75.7" y="30.2" width="4.5" height="1" fill="#c4c4c4"/><rect x="83.4" y="30.2" width="4.5" height="1" fill="#c4c4c4"/><rect x="91.1" y="30.2" width="4.5" height="1" fill="#c4c4c4"/><rect x="98.8" y="30.2" width="4.5" height="1" fill="#c4c4c4"/><rect x="106.5" y="30.2" width="4.5" height="1" fill="#c4c4c4"/><rect x="114.2" y="30.2" width="4.5" height="1" fill="#c4c4c4"/><rect x="68.0" y="33.1" width="4.5" height="1" fill="#c4c4c4"/><rect x="75.7" y="33.1" width="4.5" height="1" fill="#c4c4c4"/><rect x="83.4" y="33.1" width="4.5" height="1" fill="#c4c4c4"/><rect x="91.1" y="33.1" width="4.5" height="1" fill="#c4c4c4"/><rect x="98.8" y="33.1" width="4.5" height="1" fill="#c4c4c4"/><rect x="106.5" y="33.1" width="4.5" height="1" fill="#c4c4c4"/><rect x="114.2" y="33.1" width="4.5" height="1" fill="#c4c4c4"/><rect x="68.0" y="36.0" width="4.5" height="1" fill="#c4c4c4"/><rect x="75.7" y="36.0" width="4.5" height="1" fill="#c4c4c4"/><rect x="83.4" y="36.0" width="4.5" height="1" fill="#c4c4c4"/><rect x="91.1" y="36.0" width="4.5" height="1" fill="#c4c4c4"/><rect x="98.8" y="36.0" width="4.5" height="1" fill="#c4c4c4"/><rect x="106.5" y="36.0" width="4.5" height="1" fill="#c4c4c4"/><rect x="114.2" y="36.0" width="4.5" height="1" fill="#c4c4c4"/><rect x="68.0" y="38.9" width="4.5" height="1" fill="#c4c4c4"/><rect x="75.7" y="38.9" width="4.5" height="1" fill="#c4c4c4"/><rect x="83.4" y="38.9" width="4.5" height="1" fill="#c4c4c4"/><rect x="91.1" y="38.9" width="4.5" height="1" fill="#c4c4c4"/><rect x="98.8" y="38.9" width="4.5" height="1" fill="#c4c4c4"/><rect x="106.5" y="38.9" width="4.5" height="1" fill="#c4c4c4"/><rect x="114.2" y="38.9" width="4.5" height="1" fill="#c4c4c4"/><rect x="68.0" y="41.7" width="4.5" height="1" fill="#c4c4c4"/><rect x="75.7" y="41.7" width="4.5" height="1" fill="#c4c4c4"/><rect x="83.4" y="41.7" width="4.5" height="1" fill="#c4c4c4"/><rect x="91.1" y="41.7" width="4.5" height="1" fill="#c4c4c4"/><rect x="98.8" y="41.7" width="4.5" height="1" fill="#c4c4c4"/><rect x="106.5" y="41.7" width="4.5" height="1" fill="#c4c4c4"/><rect x="114.2" y="41.7" width="4.5" height="1" fill="#c4c4c4"/><rect x="68.0" y="44.6" width="4.5" height="1" fill="#c4c4c4"/><rect x="75.7" y="44.6" width="4.5" height="1" fill="#c4c4c4"/><rect x="83.4" y="44.6" width="4.5" height="1" fill="#c4c4c4"/><rect x="91.1" y="44.6" width="4.5" height="1" fill="#c4c4c4"/><rect x="98.8" y="44.6" width="4.5" height="1" fill="#c4c4c4"/><rect x="106.5" y="44.6" width="4.5" height="1" fill="#c4c4c4"/><rect x="114.2" y="44.6" width="4.5" height="1" fill="#c4c4c4"/><rect x="68.0" y="47.5" width="4.5" height="1" fill="#c4c4c4"/><rect x="75.7" y="47.5" width="4.5" height="1" fill="#c4c4c4"/><rect x="83.4" y="47.5" width="4.5" height="1" fill="#c4c4c4"/><rect x="91.1" y="47.5" width="4.5" height="1" fill="#c4c4c4"/><rect x="98.8" y="47.5" width="4.5" height="1" fill="#c4c4c4"/><rect x="106.5" y="47.5" width="4.5" height="1" fill="#c4c4c4"/><rect x="114.2" y="47.5" width="4.5" height="1" fill="#c4c4c4"/><rect x="68.0" y="50.3" width="4.5" height="1" fill="#c4c4c4"/><rect x="75.7" y="50.3" width="4.5" height="1" fill="#c4c4c4"/><rect x="83.4" y="50.3" width="4.5" height="1" fill="#c4c4c4"/><rect x="91.1" y="50.3" width="4.5" height="1" fill="#c4c4c4"/><rect x="98.8" y="50.3" width="4.5" height="1" fill="#c4c4c4"/><rect x="106.5" y="50.3" width="4.5" height="1" fill="#c4c4c4"/><rect x="114.2" y="50.3" width="4.5" height="1" fill="#c4c4c4"/><rect x="68.0" y="53.2" width="4.5" height="1" fill="#c4c4c4"/><rect x="75.7" y="53.2" width="4.5" height="1" fill="#c4c4c4"/><rect x="83.4" y="53.2" width="4.5" height="1" fill="#c4c4c4"/><rect x="91.1" y="53.2" width="4.5" height="1" fill="#c4c4c4"/><rect x="98.8" y="53.2" width="4.5" height="1" fill="#c4c4c4"/><rect x="106.5" y="53.2" width="4.5" height="1" fill="#c4c4c4"/><rect x="114.2" y="53.2" width="4.5" height="1" fill="#c4c4c4"/><rect x="68.0" y="56.1" width="4.5" height="1" fill="#c4c4c4"/><rect x="75.7" y="56.1" width="4.5" height="1" fill="#c4c4c4"/><rect x="83.4" y="56.1" width="4.5" height="1" fill="#c4c4c4"/><rect x="91.1" y="56.1" width="4.5" height="1" fill="#c4c4c4"/><rect x="98.8" y="56.1" width="4.5" height="1" fill="#c4c4c4"/><rect x="106.5" y="56.1" width="4.5" height="1" fill="#c4c4c4"/><rect x="114.2" y="56.1" width="4.5" height="1" fill="#c4c4c4"/><rect x="68.0" y="58.9" width="4.5" height="1" fill="#c4c4c4"/><rect x="75.7" y="58.9" width="4.5" height="1" fill="#c4c4c4"/><rect x="83.4" y="58.9" width="4.5" height="1" fill="#c4c4c4"/><rect x="91.1" y="58.9" width="4.5" height="1" fill="#c4c4c4"/><rect x="98.8" y="58.9" width="4.5" height="1" fill="#c4c4c4"/><rect x="106.5" y="58.9" width="4.5" height="1" fill="#c4c4c4"/><rect x="114.2" y="58.9" width="4.5" height="1" fill="#c4c4c4"/></svg>
<span class="abs" style="left:1px;top:194px;font-size:15px;line-height:20px;color:#444">18</span>
<svg class="abs" style="left:33px;top:200.5px;background:#fff;outline:1px solid #cfcfcf" width="129" height="73" viewBox="0 0 129 73"><rect width="129" height="7.300" fill="#00a9bc"/><rect x="59" y="1.300" width="17" height="4.800" fill="#fff"/><rect x="4.5" y="2.700" width="15" height="2.200" fill="#c9edf1"/><rect x="24" y="2.700" width="13.5" height="2.200" fill="#c9edf1"/><rect x="43.5" y="2.700" width="13.5" height="2.200" fill="#c9edf1"/><rect x="80.5" y="2.700" width="6.5" height="2.200" fill="#c9edf1"/><rect x="91.5" y="2.700" width="13.5" height="2.200" fill="#c9edf1"/><rect x="61" y="2.700" width="13" height="2.200" fill="#a9b4b6"/><path d="M22.300 1.800v4.800M41.500 1.800v4.800M78.300 1.800v4.800M89.400 1.800v4.800" stroke="#f0fbfc" stroke-width=".8"/><circle cx="8.600" cy="16.400" r="3" fill="#00a9bc"/><rect x="14" y="15.300" width="10" height="2.200" fill="#9a9a9a"/><rect x="23.7" y="21.00" width="83.3" height="1" fill="#b0b0b0"/><rect x="19.0" y="24.20" width="88.0" height="1" fill="#b0b0b0"/><rect x="19.0" y="27.40" width="61.6" height="1" fill="#b0b0b0"/><rect x="37" y="31.500" width="55" height="1" fill="#aaa"/><path d="M5 35.500h120 M5 39.200h120" stroke="#999" stroke-width=".4"/><rect x="13.0" y="37.0" width="8" height="1" fill="#9a9a9a"/><rect x="23.3" y="37.0" width="8" height="1" fill="#9a9a9a"/><rect x="33.6" y="37.0" width="8" height="1" fill="#9a9a9a"/><rect x="43.9" y="37.0" width="8" height="1" fill="#9a9a9a"/><rect x="54.2" y="37.0" width="8" height="1" fill="#9a9a9a"/><rect x="64.5" y="37.0" width="8" height="1" fill="#9a9a9a"/><rect x="74.8" y="37.0" width="8" height="1" fill="#9a9a9a"/><rect x="85.1" y="37.0" width="8" height="1" fill="#9a9a9a"/><rect x="95.4" y="37.0" width="8" height="1" fill="#9a9a9a"/><rect x="105.7" y="37.0" width="8" height="1" fill="#9a9a9a"/><rect x="116.0" y="37.0" width="8" height="1" fill="#9a9a9a"/><rect x="8" y="41.5" width="1.500" height="1" fill="#aaa"/><rect x="16.0" y="41.5" width="4" height="1.200" fill="#8c8c8c"/><rect x="8" y="44.4" width="1.500" height="1" fill="#aaa"/><rect x="16.0" y="44.4" width="4" height="1.200" fill="#8c8c8c"/><rect x="26.3" y="44.4" width="4" height="1.200" fill="#8c8c8c"/><rect x="8" y="47.3" width="1.500" height="1" fill="#aaa"/><rect x="16.0" y="47.3" width="4" height="1.200" fill="#8c8c8c"/><rect x="26.3" y="47.3" width="4" height="1.200" fill="#8c8c8c"/><rect x="36.6" y="47.3" width="4" height="1.200" fill="#8c8c8c"/><rect x="8" y="50.2" width="1.500" height="1" fill="#aaa"/><rect x="16.0" y="50.2" width="4" height="1.200" fill="#8c8c8c"/><rect x="26.3" y="50.2" width="4" height="1.200" fill="#8c8c8c"/><rect x="36.6" y="50.2" width="4" height="1.200" fill="#8c8c8c"/><rect x="46.9" y="50.2" width="4" height="1.200" fill="#8c8c8c"/><rect x="8" y="53.1" width="1.500" height="1" fill="#aaa"/><rect x="16.0" y="53.1" width="4" height="1.200" fill="#8c8c8c"/><rect x="26.3" y="53.1" width="4" height="1.200" fill="#8c8c8c"/><rect x="36.6" y="53.1" width="4" height="1.200" fill="#8c8c8c"/><rect x="46.9" y="53.1" width="4" height="1.200" fill="#8c8c8c"/><rect x="57.2" y="53.1" width="4" height="1.200" fill="#8c8c8c"/><rect x="8" y="56.0" width="1.500" height="1" fill="#aaa"/><rect x="16.0" y="56.0" width="4" height="1.200" fill="#8c8c8c"/><rect x="26.3" y="56.0" width="4" height="1.200" fill="#8c8c8c"/><rect x="36.6" y="56.0" width="4" height="1.200" fill="#8c8c8c"/><rect x="46.9" y="56.0" width="4" height="1.200" fill="#8c8c8c"/><rect x="57.2" y="56.0" width="4" height="1.200" fill="#8c8c8c"/><rect x="67.5" y="56.0" width="4" height="1.200" fill="#8c8c8c"/><rect x="8" y="58.9" width="1.500" height="1" fill="#aaa"/><rect x="16.0" y="58.9" width="4" height="1.200" fill="#8c8c8c"/><rect x="26.3" y="58.9" width="4" height="1.200" fill="#8c8c8c"/><rect x="36.6" y="58.9" width="4" height="1.200" fill="#8c8c8c"/><rect x="46.9" y="58.9" width="4" height="1.200" fill="#8c8c8c"/><rect x="57.2" y="58.9" width="4" height="1.200" fill="#8c8c8c"/><rect x="67.5" y="58.9" width="4" height="1.200" fill="#8c8c8c"/><rect x="77.8" y="58.9" width="4" height="1.200" fill="#8c8c8c"/><rect x="8" y="61.8" width="1.500" height="1" fill="#aaa"/><rect x="16.0" y="61.8" width="4" height="1.200" fill="#8c8c8c"/><rect x="26.3" y="61.8" width="4" height="1.200" fill="#8c8c8c"/><rect x="36.6" y="61.8" width="4" height="1.200" fill="#8c8c8c"/><rect x="46.9" y="61.8" width="4" height="1.200" fill="#8c8c8c"/><rect x="57.2" y="61.8" width="4" height="1.200" fill="#8c8c8c"/><rect x="67.5" y="61.8" width="4" height="1.200" fill="#8c8c8c"/><rect x="77.8" y="61.8" width="4" height="1.200" fill="#8c8c8c"/><rect x="88.1" y="61.8" width="4" height="1.200" fill="#8c8c8c"/><rect x="8" y="64.7" width="1.500" height="1" fill="#aaa"/><rect x="16.0" y="64.7" width="4" height="1.200" fill="#8c8c8c"/><rect x="26.3" y="64.7" width="4" height="1.200" fill="#8c8c8c"/><rect x="36.6" y="64.7" width="4" height="1.200" fill="#8c8c8c"/><rect x="46.9" y="64.7" width="4" height="1.200" fill="#8c8c8c"/><rect x="57.2" y="64.7" width="4" height="1.200" fill="#8c8c8c"/><rect x="67.5" y="64.7" width="4" height="1.200" fill="#8c8c8c"/><rect x="77.8" y="64.7" width="4" height="1.200" fill="#8c8c8c"/><rect x="88.1" y="64.7" width="4" height="1.200" fill="#8c8c8c"/><rect x="98.4" y="64.7" width="4" height="1.200" fill="#8c8c8c"/><rect x="8" y="67.6" width="1.500" height="1" fill="#aaa"/><rect x="16.0" y="67.6" width="4" height="1.200" fill="#8c8c8c"/><rect x="26.3" y="67.6" width="4" height="1.200" fill="#8c8c8c"/><rect x="36.6" y="67.6" width="4" height="1.200" fill="#8c8c8c"/><rect x="46.9" y="67.6" width="4" height="1.200" fill="#8c8c8c"/><rect x="57.2" y="67.6" width="4" height="1.200" fill="#8c8c8c"/><rect x="67.5" y="67.6" width="4" height="1.200" fill="#8c8c8c"/><rect x="77.8" y="67.6" width="4" height="1.200" fill="#8c8c8c"/><rect x="88.1" y="67.6" width="4" height="1.200" fill="#8c8c8c"/><rect x="98.4" y="67.6" width="4" height="1.200" fill="#8c8c8c"/><rect x="108.7" y="67.6" width="4" height="1.200" fill="#8c8c8c"/><path d="M5 70.500h120" stroke="#999" stroke-width=".4"/><rect x="5" y="71.500" width="22" height="1" fill="#aaa"/></svg>
<span class="abs" style="left:1px;top:288px;font-size:15px;line-height:20px;color:#444">19</span>
<svg class="abs" style="left:33px;top:294.5px;background:#fff;outline:1px solid #cfcfcf" width="129" height="73" viewBox="0 0 129 73"><rect width="129" height="7.300" fill="#00a9bc"/><rect x="59" y="1.300" width="17" height="4.800" fill="#fff"/><rect x="4.5" y="2.700" width="15" height="2.200" fill="#c9edf1"/><rect x="24" y="2.700" width="13.5" height="2.200" fill="#c9edf1"/><rect x="43.5" y="2.700" width="13.5" height="2.200" fill="#c9edf1"/><rect x="80.5" y="2.700" width="6.5" height="2.200" fill="#c9edf1"/><rect x="91.5" y="2.700" width="13.5" height="2.200" fill="#c9edf1"/><rect x="61" y="2.700" width="13" height="2.200" fill="#a9b4b6"/><path d="M22.300 1.800v4.800M41.500 1.800v4.800M78.300 1.800v4.800M89.400 1.800v4.800" stroke="#f0fbfc" stroke-width=".8"/><circle cx="8.600" cy="16.400" r="3" fill="#00a9bc"/><rect x="14" y="15.300" width="10" height="2.200" fill="#9a9a9a"/><rect x="45" y="23" width="40" height="1" fill="#aaa"/><path d="M20 28.500h87 M20 32h87 M20 43h87" stroke="#888" stroke-width=".45"/><rect x="34.0" y="29.8" width="10" height="1" fill="#999"/><rect x="53.0" y="29.8" width="10" height="1" fill="#999"/><rect x="72.0" y="29.8" width="10" height="1" fill="#999"/><rect x="91.0" y="29.8" width="10" height="1" fill="#999"/><rect x="24" y="34.0" width="1.500" height="1" fill="#aaa"/><rect x="40" y="34.0" width="3.500" height="1.200" fill="#8c8c8c"/><rect x="24" y="36.3" width="1.500" height="1" fill="#aaa"/><rect x="40" y="36.3" width="3.500" height="1.200" fill="#8c8c8c"/><rect x="59" y="36.3" width="3.500" height="1.200" fill="#8c8c8c"/><rect x="24" y="38.6" width="1.500" height="1" fill="#aaa"/><rect x="40" y="38.6" width="3.500" height="1.200" fill="#8c8c8c"/><rect x="59" y="38.6" width="3.500" height="1.200" fill="#8c8c8c"/><rect x="78" y="38.6" width="3.500" height="1.200" fill="#8c8c8c"/><rect x="24" y="40.9" width="1.500" height="1" fill="#aaa"/><rect x="40" y="40.9" width="3.500" height="1.200" fill="#8c8c8c"/><rect x="59" y="40.9" width="3.500" height="1.200" fill="#8c8c8c"/><rect x="78" y="40.9" width="3.500" height="1.200" fill="#8c8c8c"/><rect x="97" y="40.9" width="3.500" height="1.200" fill="#8c8c8c"/><rect x="23.7" y="53.50" width="86.3" height="1.2" fill="#a8a8a8"/><rect x="19.0" y="56.60" width="27.3" height="1.2" fill="#a8a8a8"/></svg>
<span class="abs" style="left:1px;top:382px;font-size:15px;line-height:20px;color:#444">20</span>
<svg class="abs" style="left:33px;top:388.5px;background:#fff;outline:1px solid #cfcfcf" width="129" height="73" viewBox="0 0 129 73"><rect width="129" height="7.300" fill="#00a9bc"/><rect x="59" y="1.300" width="17" height="4.800" fill="#fff"/><rect x="4.5" y="2.700" width="15" height="2.200" fill="#c9edf1"/><rect x="24" y="2.700" width="13.5" height="2.200" fill="#c9edf1"/><rect x="43.5" y="2.700" width="13.5" height="2.200" fill="#c9edf1"/><rect x="80.5" y="2.700" width="6.5" height="2.200" fill="#c9edf1"/><rect x="91.5" y="2.700" width="13.5" height="2.200" fill="#c9edf1"/><rect x="61" y="2.700" width="13" height="2.200" fill="#a9b4b6"/><path d="M22.300 1.800v4.800M41.500 1.800v4.800M78.300 1.800v4.800M89.400 1.800v4.800" stroke="#f0fbfc" stroke-width=".8"/><circle cx="8.600" cy="16.400" r="3" fill="#00a9bc"/><rect x="14" y="15.300" width="16" height="2.200" fill="#9a9a9a"/><rect x="52" y="20.800" width="24" height="1" fill="#aaa"/><rect x="46" y="26.0" width="5" height="1.200" fill="#888"/><rect x="64" y="26.0" width="14" height="1.200" fill="#888"/><rect x="46" y="29.1" width="5" height="1.200" fill="#888"/><rect x="64" y="29.1" width="14" height="1.200" fill="#888"/><rect x="46" y="32.2" width="5" height="1.200" fill="#888"/><rect x="64" y="32.2" width="14" height="1.200" fill="#888"/><rect x="46" y="35.3" width="2" height="1.200" fill="#888"/><rect x="68" y="35.3" width="6" height="1.200" fill="#888"/><rect x="46" y="38.4" width="2" height="1.200" fill="#888"/><rect x="68" y="38.4" width="6" height="1.200" fill="#888"/><rect x="16.7" y="47.50" width="103.3" height="1.3" fill="#a6a6a6"/><rect x="12.0" y="50.60" width="108.0" height="1.3" fill="#a6a6a6"/><rect x="12.0" y="53.70" width="108.0" height="1.3" fill="#a6a6a6"/><rect x="12.0" y="56.80" width="108.0" height="1.3" fill="#a6a6a6"/><rect x="12.0" y="59.90" width="108.0" height="1.3" fill="#a6a6a6"/><rect x="12.0" y="63.00" width="108.0" height="1.3" fill="#a6a6a6"/><rect x="12.0" y="66.10" width="102.6" height="1.3" fill="#a6a6a6"/></svg>
<span class="abs" style="left:1px;top:476px;font-size:15px;line-height:20px;color:#b7472a">21</span>
<div class="abs" style="left:29px;top:479px;width:136px;height:80px;border:3px solid #b7472a;background:#fff"></div>
<svg class="abs" style="left:33px;top:482.5px;background:#fff;outline:1px solid #cfcfcf" width="129" height="73" viewBox="0 0 129 73"><rect width="129" height="7.300" fill="#00a9bc"/><rect x="59" y="1.300" width="17" height="4.800" fill="#fff"/><rect x="4.5" y="2.700" width="15" height="2.200" fill="#c9edf1"/><rect x="24" y="2.700" width="13.5" height="2.200" fill="#c9edf1"/><rect x="43.5" y="2.700" width="13.5" height="2.200" fill="#c9edf1"/><rect x="80.5" y="2.700" width="6.5" height="2.200" fill="#c9edf1"/><rect x="91.5" y="2.700" width="13.5" height="2.200" fill="#c9edf1"/><rect x="61" y="2.700" width="13" height="2.200" fill="#a9b4b6"/><path d="M22.300 1.800v4.800M41.500 1.800v4.800M78.300 1.800v4.800M89.400 1.800v4.800" stroke="#f0fbfc" stroke-width=".8"/><circle cx="8.600" cy="16.400" r="3" fill="#00a9bc"/><rect x="14" y="15.300" width="28" height="2.200" fill="#9a9a9a"/><rect x="56" y="19" width="17" height="1" fill="#aaa"/><rect x="45.0" y="24.0" width="6" height="1" fill="#aaa"/><rect x="56.7" y="24.0" width="6" height="1" fill="#aaa"/><rect x="68.4" y="24.0" width="6" height="1" fill="#aaa"/><rect x="80.1" y="24.0" width="6" height="1" fill="#aaa"/><rect x="91.8" y="24.0" width="6" height="1" fill="#aaa"/><rect x="28.500" y="26.700" width="71" height="1" fill="#000"/><rect x="33.0" y="29.2" width="5" height="1" fill="#999"/><rect x="44.7" y="29.2" width="5" height="1" fill="#999"/><rect x="56.4" y="29.2" width="5" height="1" fill="#999"/><rect x="68.1" y="29.2" width="5" height="1" fill="#999"/><rect x="79.8" y="29.2" width="5" height="1" fill="#999"/><rect x="91.5" y="29.2" width="5" height="1" fill="#999"/><rect x="33.0" y="32.2" width="5" height="1" fill="#999"/><rect x="44.7" y="32.2" width="5" height="1" fill="#999"/><rect x="56.4" y="32.2" width="5" height="1" fill="#999"/><rect x="68.1" y="32.2" width="5" height="1" fill="#999"/><rect x="33.0" y="35.2" width="5" height="1" fill="#999"/><rect x="44.7" y="35.2" width="5" height="1" fill="#999"/><rect x="56.4" y="35.2" width="5" height="1" fill="#999"/><rect x="11.7" y="42.00" width="109.8" height="1.5" fill="#9a9a9a"/><rect x="7.0" y="45.15" width="114.5" height="1.5" fill="#9a9a9a"/><rect x="7.0" y="48.30" width="114.5" height="1.5" fill="#9a9a9a"/><rect x="7.0" y="51.45" width="114.5" height="1.5" fill="#9a9a9a"/><rect x="7.0" y="54.60" width="114.5" height="1.5" fill="#9a9a9a"/><rect x="7.0" y="57.75" width="114.5" height="1.5" fill="#9a9a9a"/><rect x="7.0" y="60.90" width="114.5" height="1.5" fill="#9a9a9a"/><rect x="7.0" y="64.05" width="114.5" height="1.5" fill="#9a9a9a"/><rect x="7.0" y="67.20" width="13.7" height="1.5" fill="#9a9a9a"/><rect x="36.500" y="59.200" width="43" height=".9" fill="#000"/><rect x="64.500" y="62.300" width="50" height=".9" fill="#000"/></svg>
<span class="abs" style="left:1px;top:570px;font-size:15px;line-height:20px;color:#444">22</span>
<svg class="abs" style="left:33px;top:576.5px;background:#fff;outline:1px solid #cfcfcf" width="129" height="73" viewBox="0 0 129 73"><rect width="129" height="7.300" fill="#00a9bc"/><rect x="59" y="1.300" width="17" height="4.800" fill="#fff"/><rect x="4.5" y="2.700" width="15" height="2.200" fill="#c9edf1"/><rect x="24" y="2.700" width="13.5" height="2.200" fill="#c9edf1"/><rect x="43.5" y="2.700" width="13.5" height="2.200" fill="#c9edf1"/><rect x="80.5" y="2.700" width="6.5" height="2.200" fill="#c9edf1"/><rect x="91.5" y="2.700" width="13.5" height="2.200" fill="#c9edf1"/><rect x="61" y="2.700" width="13" height="2.200" fill="#a9b4b6"/><path d="M22.300 1.800v4.800M41.500 1.800v4.800M78.300 1.800v4.800M89.400 1.800v4.800" stroke="#f0fbfc" stroke-width=".8"/></svg>
</div>
<div class="abs" style="left:183px;top:161px;width:15px;height:583px;background:#dadada"></div>
<div class="abs" style="left:183px;top:161px;width:15px;height:15px;background:#fff;border:1px solid #ababab"></div>
<div class="abs" style="left:183px;top:728px;width:15px;height:15px;background:#fff;border:1px solid #ababab"></div>
<div class="abs" style="left:183px;top:427px;width:15px;height:102px;background:#fff;border:1px solid #ababab"></div>
<svg class="abs" style="left:183px;top:161px" width="15" height="583" viewBox="0 0 15 583"><path d="M4 9.500h7l-3.500-4z M4 572.500h7l-3.500 4z" fill="#777"/></svg>
<div class="abs" style="left:202px;top:161px;width:1px;height:583px;background:#c6c6c6"></div>

<div id="slide" class="abs">
<div class="abs" style="left:0;top:0;width:974px;height:63px;background:#00a9bc;box-shadow:0 1px 3px rgba(0,0,0,.35)"></div>
<div class="abs" style="left:459px;top:16px;width:121px;height:36px;background:#fff"></div>
<span class="hd" style="left:39.5px">研究背景</span>
<span class="hd" style="left:183.5px">研究假设</span>
<span class="hd" style="left:328.5px">研究方法</span>
<span class="hd" style="left:464.5px;color:#595959">研究结果</span>
<span class="hd" style="left:605.5px">讨论</span>
<span class="hd" style="left:693.5px">研究结论</span>
<i class="vs" style="left:164px"></i><i class="vs" style="left:310px"></i><i class="vs" style="left:451px"></i><i class="vs" style="left:589px"></i><i class="vs" style="left:676px"></i>
<div class="abs" style="left:42px;top:102px;width:47px;height:47px;border-radius:50%;background:#00a9bc"></div>
<span class="abs" style="left:104px;top:108.500px;font-size:24.640px;line-height:36px;font-weight:300;color:#111;-webkit-text-stroke:.25px #111;white-space:nowrap">六、单因素方差分析</span>
<span class="abs" style="left:421px;top:148px;font-size:16.170px;line-height:24px;font-weight:300;color:#222;white-space:nowrap">表<span class="n5">5</span>&nbsp; 方差分析结果</span>
<div class="abs" style="left:213px;top:177px;width:546px;height:2px;background:#000"></div>
<div class="abs" style="left:213px;top:220px;width:546px;height:1px;background:#000"></div>
<div class="abs" style="left:213px;top:294.500px;width:546px;height:2.500px;background:#000"></div>
<div id="tbl"><span style="left:305.5px;top:192.5px">平方和</span><span style="left:393.0px;top:192.5px">df</span><span style="left:480.0px;top:192.5px">平均值平方</span><span style="left:567.0px;top:192.5px">F</span><span style="left:655.5px;top:192.5px">显著性</span><span style="left:208.0px;top:226.5px">组间</span><span style="left:305.0px;top:226.5px;letter-spacing:.75px;padding-left:.75px">5470.117</span><span style="left:393.0px;top:226.5px;letter-spacing:.75px;padding-left:.75px">5</span><span style="left:480.5px;top:226.5px;letter-spacing:.75px;padding-left:.75px">1094.023</span><span style="left:567.0px;top:226.5px;letter-spacing:.75px;padding-left:.75px">4.299</span><span style="left:654.0px;top:226.5px;letter-spacing:.75px;padding-left:.75px">.001</span><span style="left:208.0px;top:251.5px">组内</span><span style="left:305.0px;top:251.5px;letter-spacing:.75px;padding-left:.75px">67178.268</span><span style="left:393.0px;top:251.5px;letter-spacing:.75px;padding-left:.75px">264</span><span style="left:480.5px;top:251.5px;letter-spacing:.75px;padding-left:.75px">254.463</span><span style="left:208.0px;top:275.5px">总计</span><span style="left:305.0px;top:275.5px;letter-spacing:.75px;padding-left:.75px">72648.385</span><span style="left:393.0px;top:275.5px;letter-spacing:.75px;padding-left:.75px">269</span></div>
<div id="para"><p id="p1" style="top:315.5px;padding-left:36px">采用单因素方差分析法,<b class="big">判断不同网络游戏消费水平组间的游戏角色依恋程度是否有差异。</b><b>研究对象按照平均</b></p>
<p id="p2" style="top:339.5px;"><b>每月消费金融被分为六组</b>：“消费金额为<span class="n">0</span>”组（<span class="n">53</span>人）、“平均每月消费小于<span class="n">50</span>”组（<span class="n">114</span>人）、“平均每月消费<span class="n">50-100</span>”组（<span class="n">61</span></p>
<p id="p3" style="top:362.5px;">人）、“平均每月消费<span class="n">101-200</span>”组（<span class="n">28</span>人）、“平均每月消费<span class="n">201-300</span>”组（<span class="n">7</span>人）、“平均每月消费大于<span class="n">300</span>”组（<span class="n">17</span>人）。</p>
<p id="p4" style="top:386.5px;padding-left:36px">经<span class="n">Shapiro-Wilk</span>检验，各组数据服从正态分布（<span class="n">P &gt; 0.05</span>）。经<span class="n">Levene’s</span>方差齐性检验，各组数据方差齐（<span class="n">P=0.098</span>）</p>
<p id="p5" style="top:409.5px;">。<b>不同网络游戏消费水平组间游戏角色依恋程度差异具有统计学意义</b>，<span class="n">F=4.299</span>，<span class="n">P=0.001</span>，结果见表<span class="n">5</span>。</p>
<p id="p6" style="letter-spacing:.22px;top:433.5px;padding-left:36px"><span class="n">Tukey</span>检验结果表明，从<u>“消费金额为<span class="n">0</span>”组到“平均每月消费<span class="n">50-100</span>”组</u>，游戏角色依恋程度增加<span class="n">11.300</span>（<span class="n">95%</span>置信区间</p>
<p id="p7" style="letter-spacing:.05px;top:456.5px;">为<span class="n">2.318-20.283</span>），差异具有统计学意义（<span class="n">P=0.005</span>）；从<u>“平均每月消费小于<span class="n">50</span>”组到“平均每月消费<span class="n">50-100</span>”组</u>，游戏角色</p>
<p id="p8" style="letter-spacing:.045px;top:480.5px;">依恋程度增加<span class="n">9.408</span>（<span class="n">95%</span>置信区间为<span class="n">1.694-17.123</span>），差异具有统计学意义（<span class="n">P=0.007</span>）；其他组间两两比较的结果差异</p>
<p id="p9" style="top:503.5px;">无统计学意义。</p></div>
</div>
<div id="video" class="abs">
<svg class="abs" style="left:0;top:0" width="184" height="640" viewBox="0 0 184 640"><defs><filter id="b1" x="-20%" y="-20%" width="140%" height="140%"><feGaussianBlur stdDeviation="1.600"/></filter><filter id="b3" x="-30%" y="-30%" width="160%" height="160%"><feGaussianBlur stdDeviation="4"/></filter><linearGradient id="w1" x1="0" y1="0" x2="1" y2="1"><stop offset="0" stop-color="#8f9297"/><stop offset=".22" stop-color="#c4c3c6"/><stop offset=".6" stop-color="#dcdadc"/><stop offset="1" stop-color="#e2dfe1"/></linearGradient><linearGradient id="cy" x1="0" y1="0" x2="1" y2="0"><stop offset="0" stop-color="#8fc6c8"/><stop offset=".55" stop-color="#a5dfe2"/><stop offset=".8" stop-color="#c9f3f3"/><stop offset="1" stop-color="#a0dcde"/></linearGradient><linearGradient id="w4" x1="0" y1="0" x2="1" y2="0"><stop offset="0" stop-color="#857e76"/><stop offset=".3" stop-color="#b5ada0"/><stop offset="1" stop-color="#c4bcae"/></linearGradient><clipPath id="c1"><rect x="0" y="0" width="184" height="128"/></clipPath><clipPath id="c2"><rect x="0" y="128" width="184" height="128"/></clipPath><clipPath id="c3"><rect x="0" y="256" width="184" height="128"/></clipPath><clipPath id="c4"><rect x="0" y="384" width="184" height="128"/></clipPath><clipPath id="av"><circle cx="92" cy="568.500" r="32"/></clipPath></defs>
<g clip-path="url(#c1)"><rect width="184" height="128" fill="url(#w1)"/><rect x="0" y="34" width="27" height="94" fill="#d2d1d3" opacity=".8"/><path d="M0 34l27 14" stroke="#d8d6d8" stroke-width="1.500"/><rect x="148" y="0" width="36" height="128" fill="#c9bfbd"/><rect x="152" y="0" width="5" height="128" fill="#aea29f" opacity=".8"/><rect x="163" y="0" width="4" height="128" fill="#b3a7a6" opacity=".8"/><rect x="170" y="0" width="10" height="110" fill="#f2f0f7" filter="url(#b1)"/><rect x="181" y="0" width="3" height="128" fill="#bfb8c4"/><g filter="url(#b1)"><ellipse cx="38" cy="106" rx="18" ry="11" fill="#cbbf9f"/><path d="M40 128l8-22 30-14h36l30 14 10 22z" fill="#424a46"/><path d="M96 17c-26 0-36 22-34 50 1 18-6 32 2 44l68-3c8-12 2-28 1-46-1-26-11-45-37-45z" fill="#2b2527"/><ellipse cx="96.500" cy="66" rx="16" ry="21" fill="#d9b5a5"/><path d="M79 52c2-12 32-12 35 0l-1 2c-9-4-24-4-33 0z" fill="#2b2527"/><rect x="64" y="46" width="9" height="16" rx="4" fill="#ebe8f0"/><rect x="115" y="50" width="6" height="14" rx="3" fill="#e4dfe8"/><path d="M69 62c0 22-4 44-9 62" stroke="#ebe9ee" stroke-width="1.300" fill="none"/><path d="M84 92l12 20 12-20 4 36h-32z" fill="#aeb9bc"/><path d="M50 112h40 M104 108h40 M60 100v28 M132 100v28" stroke="#8e9a97" stroke-width="2" opacity=".6"/></g><g fill="none" stroke="#5a4a48" stroke-width=".9" opacity=".8"><ellipse cx="89" cy="65" rx="6.500" ry="5.500"/><ellipse cx="104" cy="65" rx="6.500" ry="5.500"/></g><ellipse cx="97" cy="78" rx="3" ry="1" fill="#c0604f" opacity=".8"/></g>
<g clip-path="url(#c2)"><rect y="128" width="184" height="128" fill="#e2e0e1"/><rect y="128" width="184" height="6" fill="#e9e7e8"/><rect y="169" width="184" height="87" fill="#c9aa84"/><rect y="169" width="49" height="87" fill="#d8bd98"/><rect x="49" y="134" width="5" height="122" fill="#a5a5a8"/><rect x="117" y="134" width="5" height="122" fill="#a5a5a8"/><rect x="46" y="132" width="11" height="4" fill="#4a4442"/><rect x="114" y="132" width="11" height="4" fill="#4a4442"/><rect y="188" width="184" height="3.500" fill="#e6cfa6"/><rect y="220" width="184" height="3.500" fill="#e6cfa6"/><rect x="3" y="178" width="38" height="10" fill="#ece3cf"/><rect x="54" y="176" width="19" height="12" fill="#eeece8"/><circle cx="63.500" cy="165" r="4.500" fill="#2c2a2c"/><rect x="96" y="170" width="18" height="18" fill="#edebe6"/><rect x="138" y="174" width="21" height="14" fill="#f0eeea"/><rect x="164" y="170" width="20" height="18" fill="#eeece6"/><rect x="81" y="171" width="2" height="12" fill="#f3f0ea"/><rect x="86" y="176" width="3" height="9" fill="#f3f0ea"/><rect x="54" y="200" width="16" height="20" fill="#e9e6e0"/><path d="M70 201l3 0 5 19-3 0z" fill="#eeeae2"/><rect x="124" y="208" width="16" height="12" fill="#dcc79d"/><rect x="148" y="202" width="22" height="18" fill="#ebe8e2"/><rect x="13" y="206" width="33" height="30" fill="#aeaeb2"/><path d="M140 236l6-16 14-2-4 18z" fill="#5a5450"/><g filter="url(#b1)"><ellipse cx="103" cy="213" rx="19.500" ry="22" fill="#2a1f1c"/><ellipse cx="103" cy="229" rx="16" ry="20" fill="#c9a288"/><path d="M86 211c4-9 30-9 34 0-6-3-28-3-34 0z" fill="#2a1f1c"/><path d="M90 226h26" stroke="#7a5a48" stroke-width="1.200"/><path d="M60 256c10-8 26-10 43-10s36 2 46 10z" fill="#cfcac6"/></g></g>
<g clip-path="url(#c3)"><rect y="256" width="184" height="128" fill="url(#cy)"/><rect y="256" width="184" height="22" fill="#cfe9e6" opacity=".9"/><path d="M0 278l12 3 12-3 12 3 12-3 12 3 12-3 12 3 12-3 12 3 12-3 12 3 12-3 12 3 12-3 4 1v-8h-184z" fill="#cfe9e6" opacity=".9"/><rect x="118" y="280" width="9" height="104" fill="#86c8cc" opacity=".55"/><rect x="144" y="280" width="14" height="104" fill="#dcf8f7" opacity=".75"/><rect x="168" y="280" width="8" height="104" fill="#8fd0d4" opacity=".5"/>
<g filter="url(#b1)"><path d="M10 336c-4-44 22-70 56-71 34 0 54 24 52 64l-3 22-10-8-8-36-70-6z" fill="#1e1e1c"/><ellipse cx="62" cy="336" rx="46" ry="58" fill="#b2917a"/><ellipse cx="60" cy="310" rx="34" ry="22" fill="#c6a890" opacity=".9"/><path d="M13 330c0-42 24-64 52-64 28 0 50 18 52 56-12-22-28-36-52-38-20 6-40 16-52 46z" fill="#1e1e1c"/><ellipse cx="111" cy="340" rx="5" ry="12" fill="#b48f78"/><rect x="110" y="344" width="3.500" height="15" rx="1.700" fill="#f1f3f1"/><ellipse cx="60" cy="374" rx="30" ry="8" fill="#8e6a58" opacity=".8"/></g>
<g fill="none" stroke="#5a3a2c" stroke-width="1.600" filter="url(#b1)"><ellipse cx="33" cy="347" rx="21" ry="15" transform="rotate(-8 33 347)"/><ellipse cx="80" cy="336" rx="18" ry="14" transform="rotate(-8 80 336)"/><path d="M97 330l14-7 M53 341l10-2"/></g><g filter="url(#b1)" fill="#4c3b30"><ellipse cx="36" cy="343" rx="6" ry="2.300"/><ellipse cx="78" cy="333" rx="6" ry="2.300"/></g></g>
<g clip-path="url(#c4)"><rect y="384" width="184" height="128" fill="url(#w4)"/><rect x="51" y="384" width="92" height="40" fill="#cfccc5"/><rect x="56" y="384" width="82" height="35" fill="#dad7d0"/><rect x="61" y="384" width="68" height="28" fill="#4d4944"/>
<g filter="url(#b1)"><path d="M10 512l10-24 46-24h52l42 20 14 28z" fill="#b7cfc6"/><path d="M68 436c-2-26 12-40 34-40 24 0 36 16 34 42l-4 10-60-2z" fill="#2b2724"/><ellipse cx="101" cy="455" rx="29" ry="40" fill="#ad7b60"/><ellipse cx="100" cy="434" rx="22" ry="10" fill="#bd8d72" opacity=".9"/><path d="M70 440c0-24 14-36 32-36 20 0 32 12 32 36-8-14-18-20-32-20s-24 6-32 20z" fill="#2b2724"/><path d="M73 446h56" stroke="#3a2a26" stroke-width="2.200"/><ellipse cx="88" cy="448" rx="5" ry="2" fill="#4a342c"/><ellipse cx="114" cy="448" rx="5" ry="2" fill="#4a342c"/><ellipse cx="101" cy="480" rx="9" ry="3" fill="#5a3028"/><path d="M82 494l19 18 19-18 8 18h-54z" fill="#90a89f"/></g><rect y="510" width="184" height="2" fill="#7fd0d8" opacity=".7"/></g>
<rect y="512" width="184" height="128" fill="#2b2f33"/><circle cx="92" cy="568.500" r="32" fill="#fbfaf8"/><g clip-path="url(#av)"><path d="M76 560c0-14 12-22 26-20 12 2 18 12 16 24-2 10-10 14-12 22l-16 4-6-8-6-2 2-6-4-4z" fill="#f0ddd0"/><ellipse cx="101" cy="557" rx="13" ry="9" fill="#c9b8a8"/><ellipse cx="91" cy="556" rx="7.500" ry="8.500" fill="none" stroke="#e03a3a" stroke-width="1.200"/><path d="M68 548l52 14 M98 552l14 34" stroke="#666" stroke-width=".8"/><rect x="87" y="539" width="10" height="6" fill="#eedfae"/><rect x="61" y="565" width="9" height="6" fill="#eedfae"/><rect x="110" y="571" width="11" height="7" fill="#eedfae"/><rect x="87" y="592" width="10" height="6" fill="#eedfae"/></g>
</svg>
<div class="abs" style="left:2px;top:104px;width:180px;height:22px;background:rgba(8,10,12,.74)"></div><svg class="abs" style="left:3px;top:107px" width="16" height="16" viewBox="0 0 16 16"><path d="M1 2h13v9h-13z M4 14.500h7 M7.500 11v3" fill="#fff" stroke="#fff" stroke-width="1"/><path d="M4.500 9c.5-3 2.500-4 5-4v-2l3.500 3.200-3.500 3.200v-2c-2 0-3.500.3-5 1.600z" fill="#222"/></svg><svg class="abs" style="left:22px;top:107px" width="16" height="16" viewBox="0 0 16 16"><path d="M5.500 2.500a2.200 2.200 0 0 1 4.400 0v5a2.200 2.200 0 0 1-4.400 0z" fill="#fff"/><path d="M3.500 7.500a4.200 4.200 0 0 0 8.400 0 M7.700 11.700v2.300" fill="none" stroke="#fff" stroke-width="1.300"/></svg><span class="abs" style="left:41px;top:107px;font-size:11.500px;line-height:16px;color:#fff;white-space:nowrap;font-weight:500">孔钟慧</span>
<div class="abs" style="left:2px;top:232px;width:180px;height:22px;background:rgba(8,10,12,.74)"></div><svg class="abs" style="left:6px;top:235px" width="16" height="16" viewBox="0 0 16 16"><path d="M5.500 2.500a2.200 2.200 0 0 1 4.400 0v5a2.200 2.200 0 0 1-4.400 0z" fill="#cfcfcf"/><path d="M3.500 7.500a4.200 4.200 0 0 0 8.400 0 M7.700 11.700v2.300" fill="none" stroke="#cfcfcf" stroke-width="1.300"/><path d="M1.500 14l12.500-12" stroke="#e0463c" stroke-width="1.300"/></svg><span class="abs" style="left:26px;top:235px;font-size:11.500px;line-height:16px;color:#fff;white-space:nowrap;font-weight:500">王莹莹</span>
<div class="abs" style="left:2px;top:360px;width:180px;height:22px;background:rgba(8,10,12,.74)"></div><svg class="abs" style="left:6px;top:363px" width="16" height="16" viewBox="0 0 16 16"><path d="M5.500 2.500a2.200 2.200 0 0 1 4.400 0v5a2.200 2.200 0 0 1-4.400 0z" fill="#cfcfcf"/><path d="M3.500 7.500a4.200 4.200 0 0 0 8.400 0 M7.700 11.700v2.300" fill="none" stroke="#cfcfcf" stroke-width="1.300"/><path d="M1.500 14l12.500-12" stroke="#e0463c" stroke-width="1.300"/></svg><span class="abs" style="left:26px;top:363px;font-size:11.500px;line-height:16px;color:#fff;white-space:nowrap;font-weight:500">周柳</span>
<div class="abs" style="left:2px;top:488px;width:180px;height:22px;background:rgba(8,10,12,.74)"></div><svg class="abs" style="left:6px;top:491px" width="16" height="16" viewBox="0 0 16 16"><path d="M5.500 2.500a2.200 2.200 0 0 1 4.400 0v5a2.200 2.200 0 0 1-4.400 0z" fill="#fff"/><path d="M3.500 7.500a4.200 4.200 0 0 0 8.400 0 M7.700 11.700v2.300" fill="none" stroke="#fff" stroke-width="1.300"/><rect x="6" y="6" width="3.400" height="3" fill="#2ecc71"/></svg><span class="abs" style="left:26px;top:491px;font-size:11.500px;line-height:16px;color:#fff;white-space:nowrap;font-weight:500">李安民</span>
<div class="abs" style="left:3px;top:616px;width:48px;height:22px;background:#f5a623;color:#fff;font-size:11.500px;line-height:22px;font-weight:700;text-align:center;letter-spacing:.5px">主持人</div>
<div class="abs" style="left:51px;top:616px;width:131px;height:22px;background:rgba(8,10,12,.74)"></div><svg class="abs" style="left:55px;top:619px" width="16" height="16" viewBox="0 0 16 16"><path d="M5.500 2.500a2.200 2.200 0 0 1 4.400 0v5a2.200 2.200 0 0 1-4.400 0z" fill="#777"/><path d="M3.500 7.500a4.200 4.200 0 0 0 8.400 0 M7.700 11.700v2.300" fill="none" stroke="#777" stroke-width="1.300"/><path d="M1.500 14l12.500-12" stroke="#e0463c" stroke-width="1.300"/></svg><span class="abs" style="left:75px;top:619px;font-size:11.500px;line-height:16px;color:#8d8f91;white-space:nowrap;font-weight:500">毛雪晨</span>
<div class="abs" style="left:37px;top:610px;width:110px;height:30px;background:rgba(0,0,0,.42)"></div><svg class="abs" style="left:84px;top:619px" width="16" height="10" viewBox="0 0 16 10"><path d="M2 2l6 5 6-5" fill="none" stroke="#fff" stroke-width="1.500"/></svg>
</div>
<div class="abs" style="left:1160px;top:364px;width:17px;height:40px;background:#8a8a8a;border-radius:2px 0 0 2px"></div>
<svg class="abs" style="left:1160px;top:364px" width="17" height="40" viewBox="0 0 17 40"><path d="M6 14l6 6-6 6" fill="none" stroke="#fff" stroke-width="1.500"/></svg>
<div class="abs" style="left:1040px;top:127px;width:137px;height:37px;background:#2b2f33;border-radius:3px 0 0 3px"></div>
<span class="abs" style="left:1052px;top:139px;font-size:12px;line-height:16px;color:#fff;white-space:nowrap">正在讲话: 李安民;</span>
<svg class="abs" style="left:1346px;top:706px" width="12" height="12" viewBox="0 0 12 12"><path d="M1 1h10 M1 5h10" stroke="#555" stroke-width="1"/><path d="M2 2.500h8l-4 3z M2 6.500h8l-4 3.500z" fill="#555"/></svg>

<div class="abs" style="left:203px;top:742px;width:1158px;height:3px;background:#ececec;border-top:1px solid #c8c8c8"></div>
<div id="status" class="abs">
<span class="l" style="left:3px">幻灯片 第 21 张，共 33 张</span>
<svg class="abs" style="left:165px;top:6px" width="16" height="14" viewBox="0 0 16 14" fill="none" stroke="#555" stroke-width="1"><path d="M7.500 2.500c-2-1.500-4-1.500-6 0v9c2-1.500 4-1.500 6 0z M7.500 2.500c1-1 2-1.300 3-1.300 M7.500 11.500c1-1 2.500-1.300 4-1"/><path d="M9.500 9l1-2.500 4-4.500 1.500 1.500-4 4.500z" fill="#555" stroke="none"/></svg>
<span class="l" style="left:197px">中文(中国)</span>
<svg class="abs" style="left:877px;top:6px" width="14" height="14" viewBox="0 0 14 14" fill="none" stroke="#444" stroke-width="1.100"><path d="M1.500 8.500h11 M1.500 12.500h11 M4 5.500h6l-3-3.500z"/></svg>
<span class="l" style="left:895px">备注</span>
<svg class="abs" style="left:938px;top:6px" width="15" height="14" viewBox="0 0 15 14"><path d="M1 1.500h13v8h-8l-3 3v-3h-2z" fill="#444"/></svg>
<span class="l" style="left:956px">批注</span>
<div class="abs" style="left:999px;top:3px;width:40px;height:17px;background:#c6c6c6"></div>
<svg class="abs" style="left:1000px;top:3px" width="361" height="18" viewBox="0 0 361 18" fill="none" stroke="#555" stroke-width="1"><path d="M12.500 3.500h13v11h-13z M15.500 3.500v11 M18 6.500h5v5h-5z"/><path d="M52.500 3.500h5v4h-5z M60.500 3.500h5v4h-5z M52.500 10.500h5v4h-5z M60.500 10.500h5v4h-5z"/><path d="M98.500 4.500v10 M98.500 4.500c-2-1.500-4-1.500-6-.5v9c2-1 4-1 6 .5 M98.500 4.500c2-1.500 4-1.500 6-.5v9c-2-1-4-1-6 .5 M94 7h3 M94 9.500h3 M100 7h3 M100 9.500h3"/><path d="M132 3.500h14 M133.500 3.500v7h11v-7 M139 10.500v3 M135.500 14.500h7"/><path d="M164 9.500h8 M282 9.500h8 M286 5.500v8"/><path d="M178 9.500h99" stroke="#8a8a8a"/><path d="M228.500 7v5" stroke="#8a8a8a"/><rect x="214" y="3" width="4" height="12" fill="#555" stroke="none"/><path d="M342.500 3.500h11v11h-11z M348 5v3 M348 11v3 M344 9h3 M349.500 9h3"/></svg>
<span class="l" style="left:1304px">77%</span>
</div>
</body>
</html>
